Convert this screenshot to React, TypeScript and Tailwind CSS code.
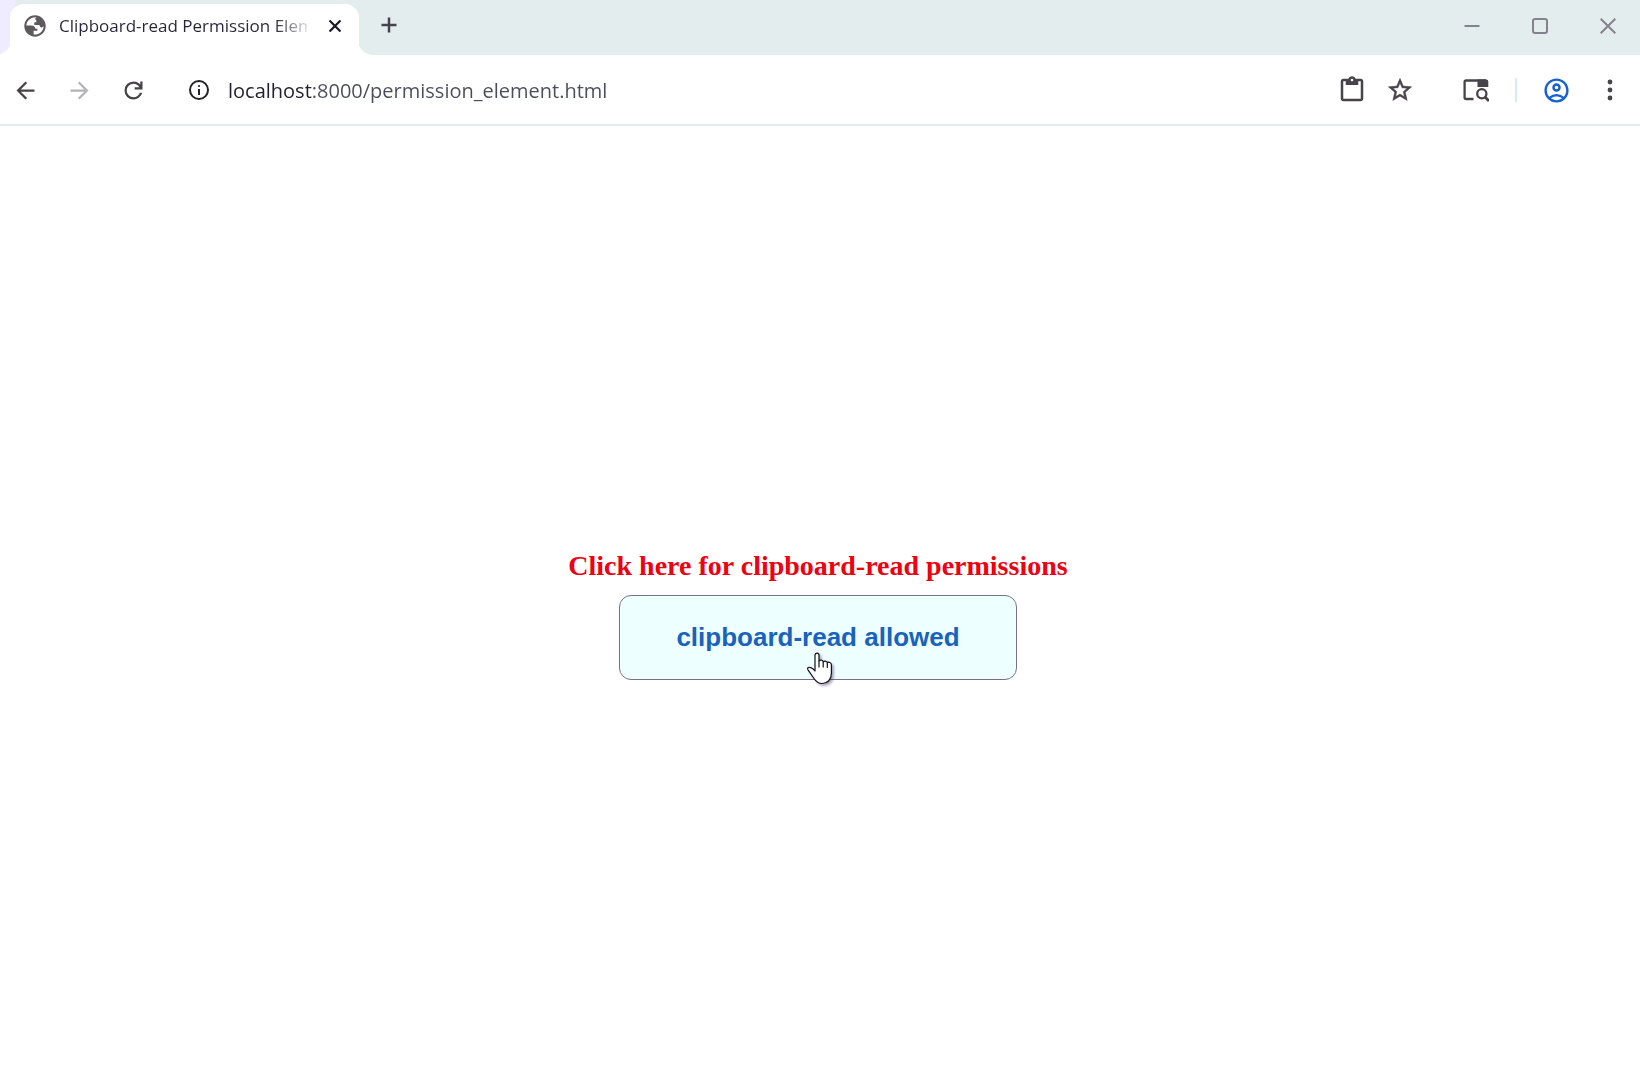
import React from "react";

type IconProps = { className?: string; d: string };

function Glyph({ className, d }: IconProps) {
  return (
    <svg viewBox="0 0 24 24" fill="currentColor" className={className} aria-hidden="true">
      <path fillRule="evenodd" d={d} />
    </svg>
  );
}

const icons = {
  back: "m7.825 13 5.6 5.6L12 20l-8-8 8-8 1.425 1.4-5.6 5.6H20v2z",
  forward: "M16.175 13H4v-2h12.175l-5.6-5.6L12 4l8 8-8 8-1.425-1.4z",
  reload:
    "M12 20q-3.35 0-5.675-2.325T4 12t2.325-5.675T12 4q1.725 0 3.3.713T18 6.75V4h2v7h-7V9h4.2q-.8-1.4-2.187-2.2T12 6Q9.5 6 7.75 7.75T6 12t1.75 4.25T12 18q1.925 0 3.475-1.1T17.65 14h2.1q-.7 2.65-2.85 4.325T12 20",
  info: "M11 17h2v-6h-2zm1-8q.425 0 .713-.288T13 8t-.288-.712T12 7t-.712.288T11 8t.288.713T12 9m0 13a10 10 0 1 1 0-20 10 10 0 0 1 0 20m0-2a8 8 0 1 0 0-16 8 8 0 0 0 0 16",
  clipboard:
    "M5 21q-.825 0-1.412-.587T3 19V5q0-.825.588-1.412T5 3h4.175q.275-.875 1.075-1.437T12 1q1 0 1.788.563T14.85 3H19q.825 0 1.413.588T21 5v14q0 .825-.587 1.413T19 21zm0-2h14V5h-2v3H7V5H5zm7-14q.425 0 .713-.288T13 4t-.288-.712T12 3t-.712.288T11 4t.288.713T12 5",
  star: "M22 9.24l-7.19-.62L12 2 9.19 8.63 2 9.24l5.46 4.73L5.82 21 12 17.27 18.18 21l-1.63-7.03zM12 15.4l-3.76 2.27 1-4.28-3.32-2.88 4.38-.38L12 6.1l1.71 4.04 4.38.38-3.32 2.88 1 4.28z",
  account:
    "M12 2a10 10 0 1 0 0 20 10 10 0 0 0 0-20M7.35 18.5C8.66 17.56 10.26 17 12 17s3.34.56 4.65 1.5C15.34 19.44 13.74 20 12 20s-3.34-.56-4.65-1.5m10.79-1.38a9.95 9.95 0 0 0-12.28 0A7.96 7.96 0 0 1 4 12c0-4.42 3.58-8 8-8s8 3.58 8 8c0 1.95-.7 3.73-1.86 5.12M12 6a3.5 3.5 0 1 0 0 7 3.5 3.5 0 0 0 0-7m0 5a1.5 1.5 0 1 1 0-3 1.5 1.5 0 0 1 0 3",
};

function GlobeIcon() {
  return (
    <svg viewBox="0 0 22 22" className="size-[22px] shrink-0" aria-hidden="true">
      <circle cx="11" cy="11" r="10.7" fill="#5f585c" />
      <path
        fill="#fff"
        d="M12 2.3C7 1.8 2.6 5.7 2.3 10.6L7.5 10.6C9.7 10.6 11.4 12 11.4 13.7L13.4 13.7L13.4 15.7L9.6 15.7L9.600 19.5C14.8 20.2 19.5 16.3 19.7 11.2C19 12.2 17.8 12.6 16.5 12.3L15.3 10.1L11.6 10.1C10.6 10.1 10 9.4 10.2 8.5L10.5 7.2L12.3 7.2L12.3 5.2C11.2 5 11 3.5 12 2.3Z"
      />
    </svg>
  );
}

function TabSearchIcon() {
  return (
    <svg viewBox="0 0 26 24" fill="none" stroke="currentColor" strokeWidth="2.3" className="h-6 w-[26px]" aria-hidden="true">
      <path d="M10.5 21H3.200Q1.600 21 1.600 19.400V4.100Q1.600 2.500 3.200 2.500H23" />
      <path d="M14.500 1.400H23.300Q25.300 1.400 25.300 3.400V9H14.500Z" fill="currentColor" stroke="none" />
      <circle cx="18.800" cy="15.800" r="4.600" />
      <path d="m22 19 4 4" strokeWidth="2.800" />
    </svg>
  );
}

function HandCursor() {
  return (
    <svg
      viewBox="0 0 28 34"
      className="pointer-events-none absolute top-[55px] left-1/2 -ml-3 h-[34px] w-7 drop-shadow-[2px_2px_1px_rgba(60,40,90,0.4)]"
      aria-hidden="true"
    >
      <path
        fill="#fff"
        stroke="#14101c"
        strokeWidth="1.200"
        strokeLinejoin="round"
        d="M9 20V4.200C9 1.300 13 1.300 13 4.200V10C14 8.600 17 8.900 17.200 10.800C18.400 9.600 21 9.800 21.300 11.700C22.800 10.600 25.400 11.600 25.400 14V22.500C25.400 28.500 21.500 32.500 16 32.500C12.500 32.500 10 30.500 8 27.500L2 18.800C1 17 2.300 15.900 4 16.400C6 17 8 18.500 9 20Z"
      />
      <path stroke="#14101c" strokeWidth="1.200" strokeLinecap="round" d="M13 10V16M17.200 10.800V16M21.300 11.700V16.500" />
    </svg>
  );
}

function TabStrip() {
  return (
    <header className="flex h-[55px] items-start justify-between overflow-hidden bg-[#e4edee]">
      <div className="flex h-full items-end bg-[linear-gradient(90deg,#efecff_14px,#e4edee_17px)]">
        <div className="relative ml-[10px] flex h-[51px] w-[349px] items-start rounded-t-[14px] bg-white pt-2 pl-[14px]">
          <svg viewBox="0 0 15 15" className="absolute bottom-0 -left-[14px] size-[15px]" aria-hidden="true">
            <path d="M15 0A15 15 0 0 1 0 15H15Z" fill="#fff" />
          </svg>
          <svg viewBox="0 0 15 15" className="absolute -right-[14px] bottom-0 size-[15px]" aria-hidden="true">
            <path d="M0 0A15 15 0 0 0 15 15H0Z" fill="#fff" />
          </svg>
          <div className="flex h-7 items-center">
            <GlobeIcon />
            <span className="ml-[13px] w-[248px] overflow-hidden bg-[linear-gradient(90deg,#262638_216px,transparent_254px)] bg-clip-text text-[17px] leading-7 whitespace-nowrap text-transparent">
              Clipboard-read Permission Element
            </span>
            <button type="button" aria-label="Close tab" className="ml-4 flex size-6 items-center justify-center">
              <svg viewBox="0 0 12 12" className="size-3" stroke="#1c1824" strokeWidth="2.200" aria-hidden="true">
                <path d="m.5.5 11 11M11.500.5l-11 11" />
              </svg>
            </button>
          </div>
        </div>
        <button type="button" aria-label="New tab" className="mb-[18px] ml-[18px] flex size-6 items-center justify-center">
          <svg viewBox="0 0 16 16" className="size-4" stroke="#46434c" strokeWidth="2.500" aria-hidden="true">
            <path d="M8 .5v15M.5 8h15" />
          </svg>
        </button>
      </div>
      <div className="flex h-[52px] items-center pr-1 text-[#85818f]">
        <button type="button" aria-label="Minimize" className="flex h-full w-[68px] items-center justify-center">
          <svg viewBox="0 0 16 16" className="size-4" stroke="currentColor" strokeWidth="2" aria-hidden="true">
            <path d="M.5 8h15" />
          </svg>
        </button>
        <button type="button" aria-label="Maximize" className="flex h-full w-[68px] items-center justify-center">
          <svg viewBox="0 0 16 16" className="size-4" fill="none" stroke="currentColor" strokeWidth="2" aria-hidden="true">
            <rect x="1" y="1" width="14" height="14" rx="2" />
          </svg>
        </button>
        <button type="button" aria-label="Close" className="flex h-full w-[62px] items-center justify-center pl-[6px]">
          <svg viewBox="0 0 16 16" className="size-4" stroke="currentColor" strokeWidth="2" aria-hidden="true">
            <path d="m.7.7 14.600 14.600M15.300.7.7 15.300" />
          </svg>
        </button>
      </div>
    </header>
  );
}

function Toolbar() {
  return (
    <nav className="flex h-[71px] items-center border-b-2 border-[#e2ecee] pt-px text-[#46434a]">
      <button type="button" aria-label="Back" className="ml-3">
        <Glyph d={icons.back} className="size-[27px]" />
      </button>
      <button type="button" aria-label="Forward" className="ml-[27px] text-[#b3b4b8]">
        <Glyph d={icons.forward} className="size-[27px]" />
      </button>
      <button type="button" aria-label="Reload" className="ml-[27px]">
        <Glyph d={icons.reload} className="size-[27px]" />
      </button>
      <button type="button" aria-label="View site information" className="ml-10 text-[#242228]">
        <Glyph d={icons.info} className="size-6" />
      </button>
      <input
        type="text"
        aria-label="Address"
        defaultValue="localhost:8000/permission_element.html"
        className="ml-[17px] h-10 min-w-0 flex-1 bg-[linear-gradient(90deg,#202030_84px,#4a4e5c_84px)] bg-clip-text text-[20px] text-transparent outline-none"
      />
      <button type="button" aria-label="Clipboard access" className="ml-4">
        <Glyph d={icons.clipboard} className="size-[30px]" />
      </button>
      <button type="button" aria-label="Bookmark this page" className="ml-[19px]">
        <Glyph d={icons.star} className="size-7 stroke-current stroke-[0.4]" />
      </button>
      <button type="button" aria-label="Search tabs" className="ml-[49px]">
        <TabSearchIcon />
      </button>
      <span className="ml-[26px] h-6 w-[2px] bg-[#d6ebfa]" />
      <button type="button" aria-label="Profile" className="ml-[25px] text-[#1461d0]">
        <Glyph d={icons.account} className="size-[29px]" />
      </button>
      <button type="button" aria-label="Menu" className="mr-[18px] ml-[27px] flex h-6 w-6 items-center justify-center">
        <svg viewBox="0 0 6 22" className="h-[22px] w-[6px]" fill="currentColor" aria-hidden="true">
          <circle cx="3" cy="3" r="2.400" />
          <circle cx="3" cy="11" r="2.400" />
          <circle cx="3" cy="19" r="2.400" />
        </svg>
      </button>
    </nav>
  );
}

export default function App() {
  return (
    <div className="flex min-h-screen flex-col bg-white font-['Open_Sans',sans-serif]">
      <TabStrip />
      <Toolbar />
      <main className="flex flex-1 flex-col items-center justify-center pt-4 pr-1">
        <h1 className="font-['Liberation_Serif',serif] text-[28px] leading-8 font-bold text-[#ee0011]">
          Click here for clipboard-read permissions
        </h1>
        <button
          type="button"
          className="relative mt-[13px] h-[85px] cursor-pointer rounded-xl border border-[#77708c] bg-[#eeffff] px-14 font-['Liberation_Sans',sans-serif] text-[26px] font-bold text-[#1763bd]"
        >
          clipboard-read allowed
          <HandCursor />
        </button>
      </main>
    </div>
  );
}
